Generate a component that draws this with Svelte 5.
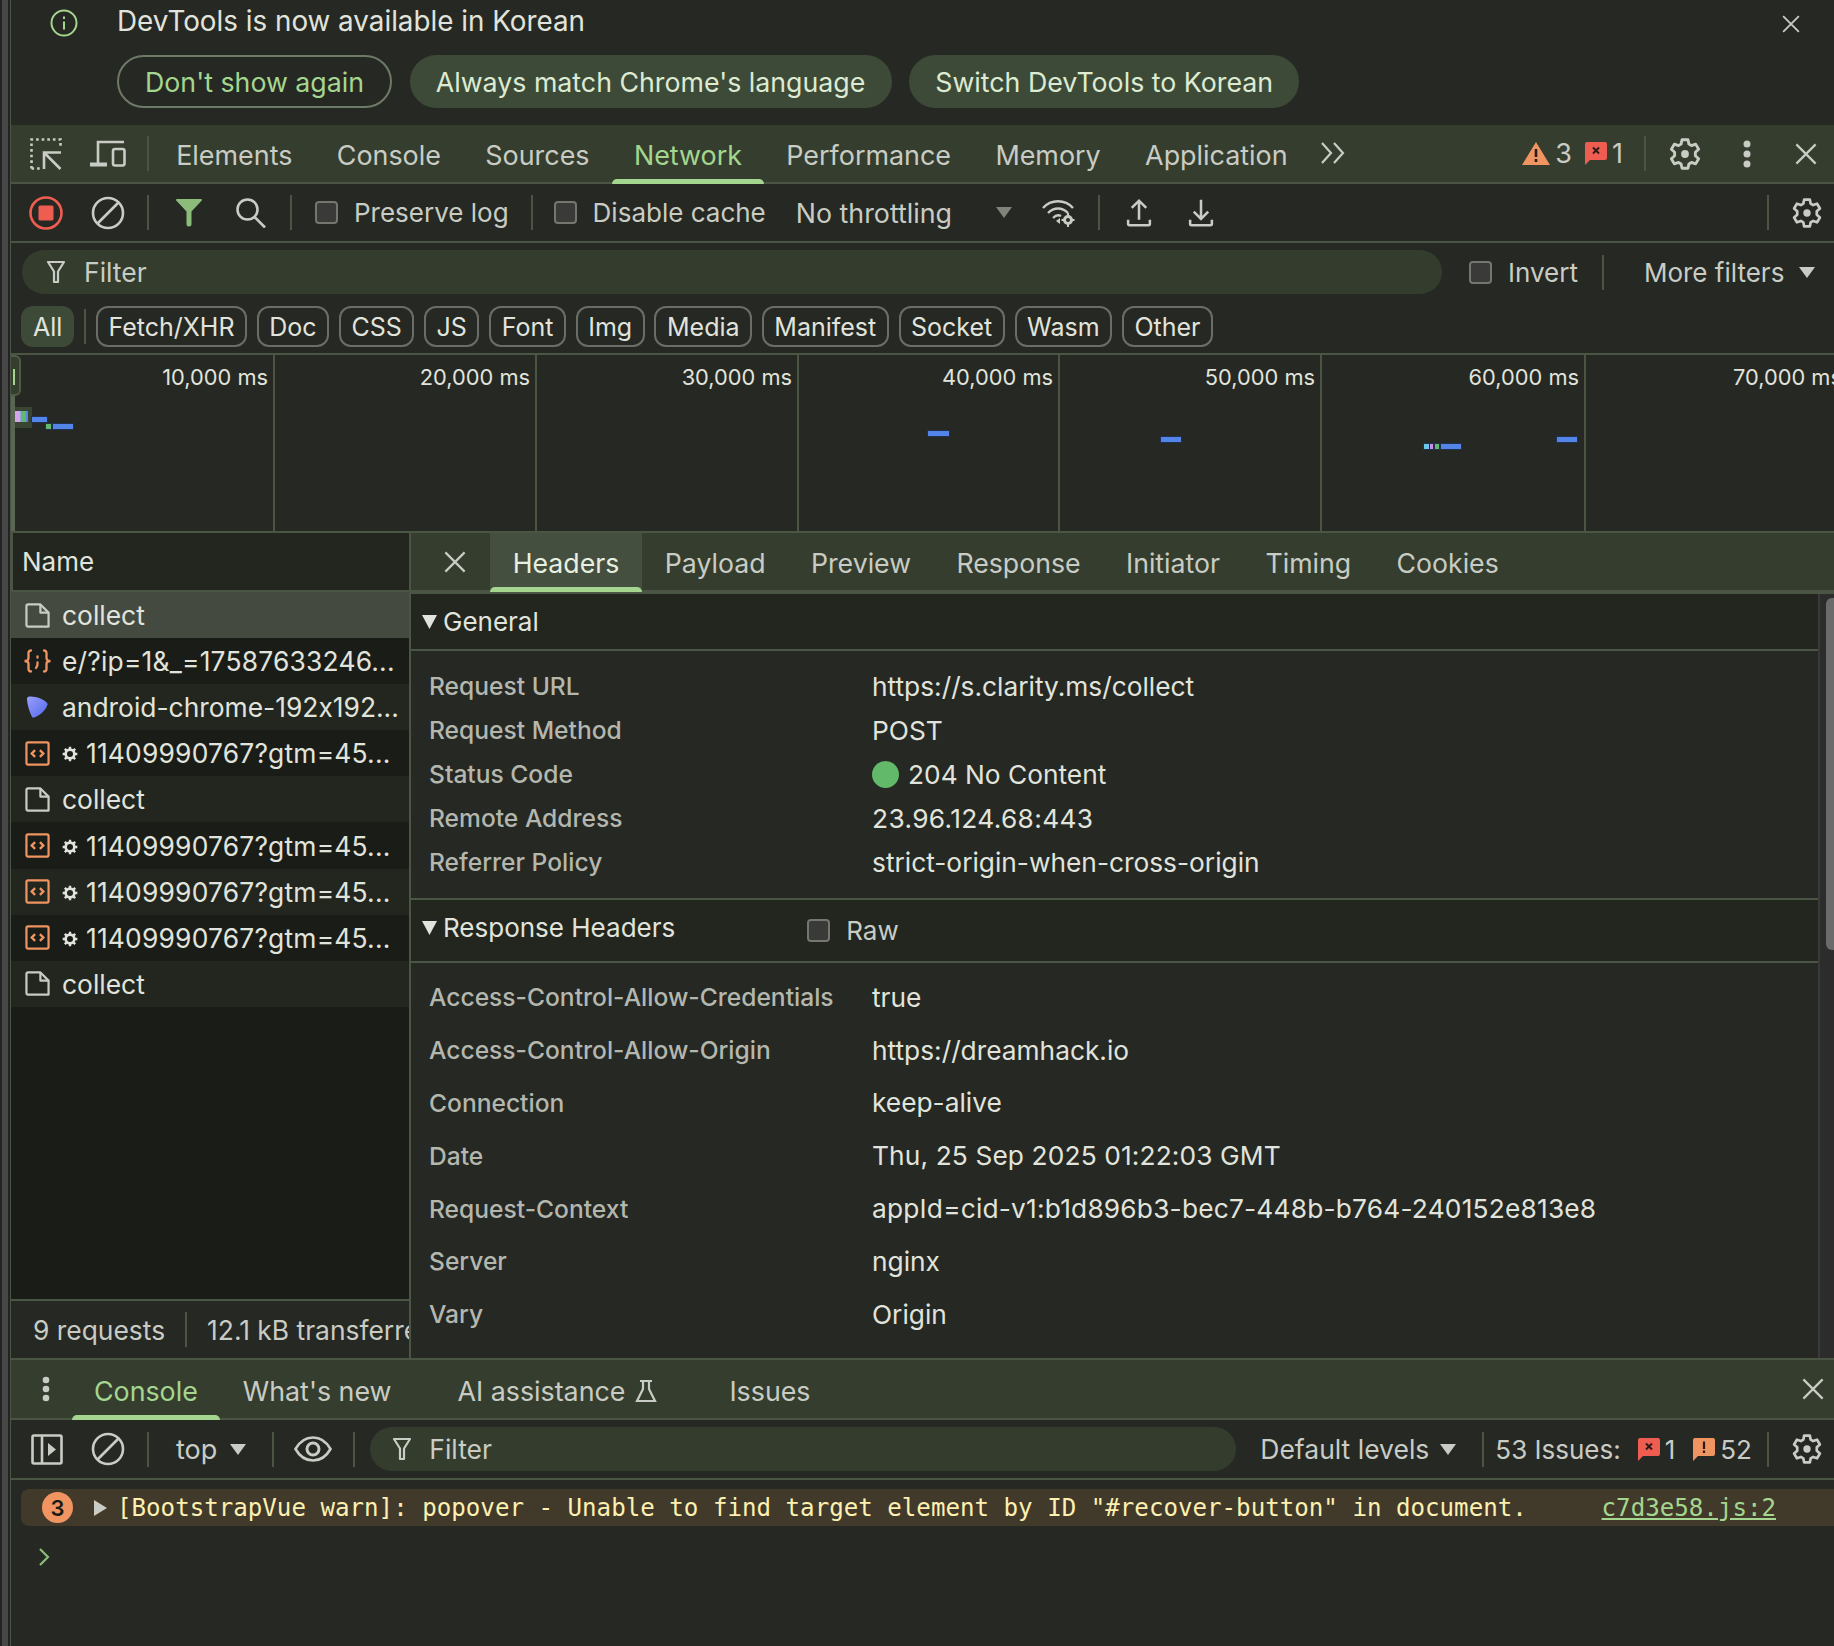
<script>
	const mainTabs = ['Elements', 'Console', 'Sources', 'Network', 'Performance', 'Memory', 'Application'];
	const chips = ['Fetch/XHR', 'Doc', 'CSS', 'JS', 'Font', 'Img', 'Media', 'Manifest', 'Socket', 'Wasm', 'Other'];
	const gridLines = [
		{ w: 264, label: '10,000 ms' },
		{ w: 262, label: '20,000 ms' },
		{ w: 262, label: '30,000 ms' },
		{ w: 261, label: '40,000 ms' },
		{ w: 262, label: '50,000 ms' },
		{ w: 264, label: '60,000 ms' }
	];
	const blue = '#5384e8';
	const green = '#62b96a';
	const bars = [
		{ x: 15, y: 411, w: 5, h: 11, c: '#d3a6ea', flat: true },
		{ x: 20, y: 411, w: 1, h: 11, c: '#9aa0e8', flat: true },
		{ x: 21, y: 411, w: 5, h: 11, c: green, flat: true },
		{ x: 26, y: 411, w: 2, h: 11, c: blue, flat: true },
		{ x: 32, y: 417, w: 15, h: 5, c: blue },
		{ x: 46, y: 424, w: 5, h: 5, c: green },
		{ x: 53, y: 424, w: 20, h: 5, c: blue },
		{ x: 928, y: 431, w: 21, h: 5, c: blue },
		{ x: 1161, y: 437, w: 20, h: 5, c: blue },
		{ x: 1424, y: 444, w: 5, h: 5, c: '#6bc4ea' },
		{ x: 1430, y: 444, w: 3, h: 5, c: '#c98ae8' },
		{ x: 1435, y: 444, w: 4, h: 5, c: green },
		{ x: 1441, y: 444, w: 20, h: 5, c: blue },
		{ x: 1557, y: 437, w: 20, h: 5, c: blue }
	];
	const requests = [
		{ type: 'doc', name: 'collect', selected: true },
		{ type: 'js', name: 'e/?ip=1&_=17587633246...' },
		{ type: 'img', name: 'android-chrome-192x192...' },
		{ type: 'wasm', name: '11409990767?gtm=45...', gear: true },
		{ type: 'doc', name: 'collect' },
		{ type: 'wasm', name: '11409990767?gtm=45...', gear: true },
		{ type: 'wasm', name: '11409990767?gtm=45...', gear: true },
		{ type: 'wasm', name: '11409990767?gtm=45...', gear: true },
		{ type: 'doc', name: 'collect' }
	];
	const detailTabs = ['Headers', 'Payload', 'Preview', 'Response', 'Initiator', 'Timing', 'Cookies'];
	const general = [
		['Request URL', 'https://s.clarity.ms/collect'],
		['Request Method', 'POST'],
		['Status Code', '204 No Content'],
		['Remote Address', '23.96.124.68:443'],
		['Referrer Policy', 'strict-origin-when-cross-origin']
	];
	const response = [
		['Access-Control-Allow-Credentials', 'true'],
		['Access-Control-Allow-Origin', 'https://dreamhack.io'],
		['Connection', 'keep-alive'],
		['Date', 'Thu, 25 Sep 2025 01:22:03 GMT'],
		['Request-Context', 'appId=cid-v1:b1d896b3-bec7-448b-b764-240152e813e8'],
		['Server', 'nginx'],
		['Vary', 'Origin']
	];
	// digit-heavy values run wider in the original font
	const tracking = { 'Remote Address': 0.35, 'Request-Context': 0.2, Date: 0.12 };
</script>

{#snippet gear(size = 36)}
	<svg class="ico" width={size} height={size} viewBox="0 0 24 24" fill="none" stroke="currentColor" stroke-width="1.9" stroke-linejoin="round">
		<path d="M10 2.5h4l.6 2.9 1.7 1 2.8-1 2 3.4-2.2 2v2.4l2.2 2-2 3.4-2.8-1-1.7 1-.6 2.9h-4l-.6-2.9-1.7-1-2.8 1-2-3.4 2.2-2v-2.4l-2.2-2 2-3.4 2.8 1 1.7-1z" />
		<circle cx="12" cy="12" r="2.6" fill="currentColor" stroke="none" />
	</svg>
{/snippet}

{#snippet close(size = 24)}
	<svg class="ico" width={size} height={size} viewBox="0 0 24 24" fill="none" stroke="currentColor" stroke-width="2.4">
		<path d="M1.500 1.500l21 21M22.500 1.500l-21 21" />
	</svg>
{/snippet}

{#snippet block()}
	<svg class="ico" width="34" height="34" viewBox="0 0 34 34" fill="none" stroke="currentColor" stroke-width="2.6">
		<circle cx="17" cy="17" r="15" />
		<path d="M27.500 6.500L6.500 27.500" />
	</svg>
{/snippet}

{#snippet funnel()}
	<svg class="ico" width="20" height="24" viewBox="0 0 20 24" fill="none" stroke="currentColor" stroke-width="2.2" stroke-linejoin="round">
		<path d="M2 2h16l-6 9.500V22H8V11.500z" />
	</svg>
{/snippet}

{#snippet checkbox()}
	<span class="check"></span>
{/snippet}

{#snippet caret()}
	<svg class="ico" width="16" height="11" viewBox="0 0 16 11"><path d="M0 0h16L8 11z" fill="currentColor" /></svg>
{/snippet}

{#snippet sectionCaret()}
	<svg class="ico" width="15" height="14" viewBox="0 0 15 14"><path d="M0 0h15L7.500 14z" fill="currentColor" /></svg>
{/snippet}

{#snippet flagError()}
	<svg class="ico" width="22" height="23" viewBox="0 0 22 23">
		<path d="M2 0h18a2 2 0 0 1 2 2v14a2 2 0 0 1-2 2H5l-5 5V2a2 2 0 0 1 2-2z" fill="#ee5d50" />
		<path d="M8 5.500l6 6M14 5.500l-6 6" stroke="#2a1a18" stroke-width="1.900" />
	</svg>
{/snippet}

{#snippet flagWarn()}
	<svg class="ico" width="22" height="23" viewBox="0 0 22 23">
		<path d="M2 0h18a2 2 0 0 1 2 2v14a2 2 0 0 1-2 2H5l-5 5V2a2 2 0 0 1 2-2z" fill="#f09462" />
		<path d="M11 3.500v7.500M11 12.500v2.500" stroke="#2a1a18" stroke-width="2.200" />
	</svg>
{/snippet}

{#snippet fileIcon(type)}
	{#if type === 'doc'}
		<svg class="ico" width="25" height="25" viewBox="0 0 26 26" fill="none" stroke="#c9ccc4" stroke-width="2.300" stroke-linejoin="round">
			<path d="M3 1.500h13l8.500 8.500V24.500H3a1.500 1.500 0 0 1-1.500-1.500V3A1.500 1.500 0 0 1 3 1.500z" />
			<path d="M16 1.500V10H24.500" />
		</svg>
	{:else if type === 'js'}
		<svg class="ico js-icon" width="29" height="24" viewBox="0 0 29 24" fill="none" stroke="#f09462" stroke-width="2.300" stroke-linecap="round">
			<path d="M8 1.500C5 1.500 5.500 4 5.500 6v3c0 2-1 3-4 3 3 0 4 1 4 3v3c0 2-.5 4.500 2.500 4.500M21 1.500c3 0 2.500 2.500 2.500 4.500v3c0 2 1 3 4 3-3 0-4 1-4 3v3c0 2 .5 4.500-2.500 4.500" />
			<path d="M14.500 7.500v1.200M14.500 13.500c.3 2.500 0 4-1.500 5.500" />
		</svg>
	{:else if type === 'img'}
		<svg class="ico img-icon" width="22" height="22" viewBox="0 0 24 24">
			<defs>
				<linearGradient id="fav" x1="0" y1="0" x2="1" y2="1">
					<stop offset="0" stop-color="#9aa0fb" />
					<stop offset="1" stop-color="#5268ea" />
				</linearGradient>
			</defs>
			<path d="M1 3C1 1 3 .5 5 .5c7 0 14 3 18 7 1 1 .5 2 0 3-2 5-7 10-14 13-1 .4-2 0-2.500-1C3.500 17 1.500 10 1 3z" fill="url(#fav)" />
		</svg>
	{:else}
		<svg class="ico" width="25" height="25" viewBox="0 0 26 26" fill="none" stroke="#f09462" stroke-width="2.300">
			<rect x="1.500" y="1.500" width="23" height="23" rx="1.500" />
			<path d="M10.500 9.500l-3.500 3.500 3.500 3.500M15.500 9.500l3.500 3.500-3.500 3.500" stroke-width="2.500" />
		</svg>
	{/if}
{/snippet}

<div class="page">
	<div class="gutter"></div>
	<div class="devtools">
		<div class="infobar">
			<div class="info-line">
				<svg class="ico info-icon" width="28" height="28" viewBox="0 0 28 28" fill="none" stroke="#a5d690" stroke-width="2">
					<circle cx="14" cy="14" r="12.500" />
					<path d="M14 12.500v8M14 7.500v2.500" />
				</svg>
				<span>DevTools is now available in Korean</span>
				<button class="bare-close">{@render close(18)}</button>
			</div>
			<div class="info-actions">
				<button class="pill outline">Don't show again</button>
				<button class="pill">Always match Chrome's language</button>
				<button class="pill">Switch DevTools to Korean</button>
			</div>
		</div>

		<div class="tabbar main-tabs">
			<svg class="ico inspect" width="32" height="32" viewBox="0 0 32 32" fill="none" stroke="currentColor" stroke-width="2.600">
				<path d="M1.500 30.500V1.500H30.500V9" stroke-dasharray="2.600 3" />
				<path d="M1.500 30.500H10" stroke-dasharray="2.600 3" />
				<path d="M14 31V14.500H31M14 14.500L30.500 31" />
			</svg>
			<svg class="ico device" width="36" height="27" viewBox="0 0 36 27" fill="none" stroke="currentColor" stroke-width="2.600">
				<path d="M34 2H8v21" />
				<path d="M0 24.500h17" stroke-width="4" />
				<rect x="23" y="9" width="11.500" height="16.500" rx="2" />
			</svg>
			<span class="vsep device-sep"></span>
			<div class="tabs">
				{#each mainTabs as t}
					<span class="tab" class:active={t === 'Network'}>{t}</span>
				{/each}
			</div>
			<svg class="ico chevrons" width="26" height="22" viewBox="0 0 26 22" fill="none" stroke="currentColor" stroke-width="2.200">
				<path d="M2 1l9 10-9 10M14 1l9 10-9 10" />
			</svg>
			<div class="grow"></div>
			<div class="counts">
				<svg class="ico" width="28" height="23" viewBox="0 0 28 23">
					<path d="M14 0l14 23H0z" fill="#f09462" />
					<path d="M14 7v8M14 17v3" stroke="#2a1a18" stroke-width="2.600" />
				</svg>
				<span class="num first">3</span>
				{@render flagError()}
				<span class="num">1</span>
			</div>
			<span class="vsep counts-sep"></span>
			{@render gear(36)}
			<svg class="ico dots" width="8" height="28" viewBox="0 0 8 28"><circle cx="4" cy="4" r="3.500" fill="currentColor" /><circle cx="4" cy="14" r="3.500" fill="currentColor" /><circle cx="4" cy="24" r="3.500" fill="currentColor" /></svg>
			{@render close(22)}
		</div>

		<div class="toolbar net-tools">
			<svg class="ico" width="34" height="34" viewBox="0 0 34 34" fill="none">
				<circle cx="17" cy="17" r="15.500" stroke="#ee5d50" stroke-width="2.600" />
				<rect x="9.500" y="9.500" width="15" height="15" rx="1.500" fill="#ee5d50" />
			</svg>
			<span class="after-record">{@render block()}</span>
			<span class="vsep"></span>
			<svg class="ico filter-on" width="26" height="28" viewBox="0 0 26 28">
				<path d="M1 0h24a1 1 0 0 1 .8 1.600L15.500 12.500V25a2.500 2.500 0 0 1-5 0V12.500L.2 1.600A1 1 0 0 1 1 0z" fill="#8cbc7a" />
			</svg>
			<svg class="ico search" width="30" height="30" viewBox="0 0 30 30" fill="none" stroke="currentColor" stroke-width="2.600">
				<circle cx="11.500" cy="11.500" r="10" />
				<path d="M18.500 19l10.500 10.500" />
			</svg>
			<span class="vsep"></span>
			<label class="cb preserve">{@render checkbox()}<span>Preserve log</span></label>
			<span class="vsep"></span>
			<label class="cb disable">{@render checkbox()}<span>Disable cache</span></label>
			<span class="throttle">No throttling</span>
			<span class="throttle-caret">{@render caret()}</span>
			<svg class="ico wifi" width="36" height="30" viewBox="0 0 36 30" fill="none" stroke="currentColor" stroke-width="2.400">
				<path d="M2 10C10 1 24 1 32 10M7 15c6-6 14-6 20 0M12 20c3-3 6-3 8-2" />
				<circle cx="27" cy="22" r="3.500" stroke-width="3" />
				<path d="M27 15v3M27 26v3M20.500 22h3M30.500 22h3" stroke-width="2" />
				<path d="M15 23l4-3v6z" fill="currentColor" stroke="none" />
			</svg>
			<span class="vsep"></span>
			<svg class="ico up" width="26" height="29" viewBox="0 0 28 32" fill="none" stroke="currentColor" stroke-width="2.800">
				<path d="M14 24V3M6 11l8-8 8 8M2 24v4.500a1.500 1.500 0 0 0 1.500 1.500h21a1.500 1.500 0 0 0 1.500-1.500V24" />
			</svg>
			<svg class="ico down" width="26" height="29" viewBox="0 0 28 32" fill="none" stroke="currentColor" stroke-width="2.800">
				<path d="M14 2v21M6 15l8 8 8-8M2 24v4.500a1.500 1.500 0 0 0 1.500 1.500h21a1.500 1.500 0 0 0 1.500-1.500V24" />
			</svg>
			<div class="grow"></div>
			<span class="vsep gear-sep"></span>
			{@render gear(34)}
		</div>

		<div class="filter-row">
			<div class="filter-pill main-filter">
				{@render funnel()}
				<span>Filter</span>
			</div>
			<label class="cb invert">{@render checkbox()}<span>Invert</span></label>
			<span class="vsep"></span>
			<span class="more">More filters</span>
			<span class="more-caret">{@render caret()}</span>
		</div>

		<div class="chip-row">
			<span class="chip all">All</span>
			<span class="vsep chip-sep"></span>
			{#each chips as c}
				<span class="chip">{c}</span>
			{/each}
		</div>

		<div class="overview">
			<div class="grid">
				{#each gridLines as g}
					<div class="slot" style:width="{g.w}px"><span>{g.label}</span></div>
				{/each}
				<div class="slot last"><span>70,000 ms</span></div>
			</div>
			<div class="strip"></div>
			<div class="handle"><span></span></div>
			<div class="hot"></div>
			{#each bars as b}
				<span class="bar" class:flat={b.flat} style:left="{b.x - 11}px" style:top="{b.y - 355}px" style:width="{b.w}px" style:height="{b.h}px" style:background={b.c}></span>
			{/each}
		</div>

		<div class="split">
			<div class="list">
				<div class="list-head">Name</div>
				<div class="rows">
					{#each requests as r, i}
						<div class="row" class:even={i % 2 === 0} class:selected={r.selected} class:tracked={r.type === 'js' || r.type === 'wasm'}>
							<span class="file-icon">{@render fileIcon(r.type)}</span>
							{#if r.gear}
								<svg class="ico row-gear" width="16" height="16" viewBox="0 0 24 24" fill="none" stroke="currentColor" stroke-width="4">
									<circle cx="12" cy="12" r="6.500" />
									<path d="M12 1v4M12 19v4M1 12h4M19 12h4M4.200 4.200l2.800 2.800M17 17l2.800 2.800M19.800 4.200L17 7M7 17l-2.800 2.800" stroke-width="3.600" />
								</svg>
							{/if}
							<span class="row-name">{r.name}</span>
						</div>
					{/each}
				</div>
				<div class="summary">
					<span>9 requests</span>
					<span class="vsep"></span>
					<span>12.1 kB transferred</span>
				</div>
			</div>

			<div class="details">
				<div class="detail-tabs">
					<span class="detail-close">{@render close(22)}</span>
					{#each detailTabs as t, i}
						<span class="dtab" class:active={i === 0}>{t}</span>
					{/each}
				</div>
				<div class="detail-body">
					<div class="track"><div class="thumb"></div></div>
					<div class="section-head first">
						<span class="tri">{@render sectionCaret()}</span>General
					</div>
					<div class="kv general">
						{#each general as [k, v]}
							<div class="kv-row">
								<span class="k">{k}</span>
								<span class="v" style:letter-spacing={tracking[k] ? `${tracking[k]}px` : null}>
									{#if k === 'Status Code'}<span class="dot"></span>{/if}{v}
								</span>
							</div>
						{/each}
					</div>
					<div class="section-head second">
						<span class="tri">{@render sectionCaret()}</span>Response Headers
						<label class="cb raw">{@render checkbox()}<span>Raw</span></label>
					</div>
					<div class="kv resp">
						{#each response as [k, v]}
							<div class="kv-row">
								<span class="k">{k}</span>
								<span class="v" style:letter-spacing={tracking[k] ? `${tracking[k]}px` : null}>{v}</span>
							</div>
						{/each}
					</div>
				</div>
			</div>
		</div>

		<div class="tabbar drawer-tabs">
			<svg class="ico drawer-dots" width="8" height="26" viewBox="0 0 8 26"><circle cx="4" cy="4" r="3.300" fill="currentColor" /><circle cx="4" cy="13" r="3.300" fill="currentColor" /><circle cx="4" cy="22" r="3.300" fill="currentColor" /></svg>
			<span class="tab dt active">Console</span>
			<span class="tab dt">What's new</span>
			<span class="tab dt ai">
				AI assistance
				<svg class="ico" width="22" height="24" viewBox="0 0 22 24" fill="none" stroke="currentColor" stroke-width="2.200">
					<path d="M5 2h12M8 2v8L2 22h18L14 10V2" />
				</svg>
			</span>
			<span class="tab dt issues-tab">Issues</span>
			<div class="grow"></div>
			{@render close(22)}
		</div>

		<div class="toolbar console-tools">
			<svg class="ico" width="32" height="31" viewBox="0 0 32 31" fill="none" stroke="currentColor" stroke-width="2.600">
				<rect x="1.500" y="1.500" width="29" height="28" rx="1.500" />
				<path d="M11 2v27" />
				<path d="M17 9l8 6.500-8 6.500z" fill="currentColor" stroke="none" />
			</svg>
			<span class="after-record">{@render block()}</span>
			<span class="vsep"></span>
			<span class="ctx">top</span>
			<span class="ctx-caret">{@render caret()}</span>
			<span class="vsep"></span>
			<svg class="ico eye" width="38" height="26" viewBox="0 0 38 26" fill="none" stroke="currentColor" stroke-width="2.600">
				<path d="M1.500 13C6 5 12 1.500 19 1.500S32 5 36.500 13C32 21 26 24.500 19 24.500S6 21 1.500 13z" />
				<circle cx="19" cy="13" r="6" stroke-width="3" />
			</svg>
			<span class="vsep"></span>
			<div class="filter-pill console-filter">
				{@render funnel()}
				<span>Filter</span>
			</div>
			<span class="levels">Default levels</span>
			<span class="levels-caret">{@render caret()}</span>
			<span class="vsep"></span>
			<span class="issues">53 Issues:</span>
			{@render flagError()}
			<span class="inum">1</span>
			{@render flagWarn()}
			<span class="inum last">52</span>
			<span class="vsep gear-sep"></span>
			{@render gear(34)}
		</div>

		<div class="console-body">
			<div class="warn">
				<span class="badge">3</span>
				<svg class="ico" width="13" height="16" viewBox="0 0 13 16"><path d="M0 0l13 8-13 8z" fill="#c9ccc4" /></svg>
				<span class="msg">[BootstrapVue warn]: popover - Unable to find target element by ID "#recover-button" in document.</span>
				<span class="src">c7d3e58.js:2</span>
			</div>
			<svg class="ico prompt" width="12" height="18" viewBox="0 0 12 18" fill="none" stroke="#8cbc7a" stroke-width="2.200"><path d="M2 1l8 8-8 8" /></svg>
		</div>
	</div>
</div>

<style>
	:global(body) {
		margin: 0;
		background: #262823;
	}

	.page {
		display: flex;
		width: 1834px;
		height: 1646px;
		overflow: hidden;
		font-family: Inter, 'Liberation Sans', sans-serif;
		font-feature-settings: 'calt' 0;
		font-size: 26px;
		color: #c9ccc4;
		background: #262823;
	}

	.gutter {
		flex: 0 0 11px;
		box-sizing: border-box;
		border-right: 1px solid #4a5544;
		background: linear-gradient(90deg, #232323 0 2px, #474747 2px 8px, #232323 8px);
	}

	.devtools {
		flex: 1;
		min-width: 0;
		display: flex;
		flex-direction: column;
	}

	.ico {
		flex: none;
		display: block;
	}

	.grow {
		flex: 1;
	}

	.vsep {
		flex: none;
		width: 2px;
		height: 35px;
		background: #4a5544;
	}

	button {
		font: inherit;
		margin: 0;
		padding: 0;
		background: none;
		border: none;
		color: inherit;
	}

	/* infobar */
	.infobar {
		flex: none;
		height: 125px;
		color: #e1e4dc;
	}

	.info-line {
		display: flex;
		align-items: center;
		height: 42px;
		padding-left: 39px;
		font-size: 27.8px;
	}

	.info-icon {
		margin-right: 39px;
		margin-top: 3px;
	}

	.bare-close {
		margin-left: auto;
		margin-right: 34px;
		margin-top: 6px;
		color: #c9ccc4;
	}

	.info-actions {
		display: flex;
		gap: 17.5px;
		margin-top: 13px;
		padding-left: 106px;
	}

	.pill {
		height: 53px;
		box-sizing: border-box;
		padding: 0 26.2px;
		border-radius: 27px;
		background: #3e4a38;
		color: #dcebd2;
		font-size: 26.75px;
		white-space: nowrap;
	}

	.pill.outline {
		background: none;
		border: 2px solid #6e7a68;
		color: #a5d690;
		padding: 0 26px;
	}

	/* tab bars */
	.tabbar {
		display: flex;
		align-items: center;
		flex: none;
		box-sizing: border-box;
		background: #353e2e;
		border-bottom: 2px solid #4a5544;
	}

	.main-tabs {
		height: 59px;
		padding-left: 19px;
		padding-right: 17px;
	}

	.device {
		margin-left: 28px;
	}

	.device-sep {
		margin-left: 21px;
	}

	.tabs {
		display: flex;
		align-self: stretch;
		margin-left: 5px;
	}

	.tab {
		position: relative;
		display: flex;
		align-items: center;
		padding: 3px 22.2px 0;
		font-size: 26.9px;
		white-space: nowrap;
	}

	.tab.active {
		color: #a5d690;
	}

	.tab.active::after {
		content: '';
		position: absolute;
		left: 0;
		right: 0;
		bottom: -2px;
		height: 5px;
		border-radius: 5px 5px 0 0;
		background: #a5d690;
	}

	.chevrons {
		margin-left: 10px;
		margin-top: -2px;
	}

	.counts {
		display: flex;
		align-items: center;
		gap: 5px;
		font-size: 27px;
	}

	.num.first {
		margin-right: 8px;
	}

	.counts-sep {
		margin-left: 21px;
		margin-right: 21px;
	}

	.dots {
		margin: 0 44px 0 40px;
	}

	/* toolbars */
	.toolbar {
		display: flex;
		align-items: center;
		flex: none;
		box-sizing: border-box;
		border-bottom: 2px solid #4a5544;
	}

	.net-tools {
		height: 59px;
		padding-left: 18px;
		padding-right: 10px;
	}

	.after-record {
		margin-left: 28px;
		margin-right: 22px;
	}

	.filter-on {
		margin-left: 27px;
	}

	.search {
		margin-left: 34px;
		margin-right: 24px;
	}

	.cb {
		display: flex;
		align-items: center;
		white-space: nowrap;
	}

	.check {
		flex: none;
		width: 23px;
		height: 23px;
		box-sizing: border-box;
		border: 2px solid #74766f;
		border-radius: 4px;
		background: #3a3b38;
	}

	.preserve {
		margin-left: 23px;
		margin-right: 22px;
		gap: 16px;
	}

	.disable {
		margin-left: 21px;
		gap: 16px;
	}

	.throttle {
		margin-left: 30px;
		font-size: 26.8px;
	}

	.throttle-caret {
		margin-left: 44px;
		color: #808379;
	}

	.wifi {
		margin-left: 29px;
		margin-right: 21px;
	}

	.up {
		margin-left: 26px;
	}

	.down {
		margin-left: 36px;
	}

	.gear-sep {
		margin-right: 21px;
	}

	/* filter row */
	.filter-row {
		display: flex;
		align-items: center;
		flex: none;
		box-sizing: border-box;
		height: 63px;
		padding-left: 11px;
		padding-bottom: 5px;
	}

	.filter-pill {
		display: flex;
		align-items: center;
		box-sizing: border-box;
		height: 44px;
		border-radius: 22px;
		background: #343d2d;
		padding-left: 24px;
		gap: 18px;
	}

	.filter-pill span {
		font-size: 26.5px;
	}

	.main-filter {
		flex: none;
		width: 1420px;
	}

	.invert {
		margin-left: 27px;
		gap: 16px;
	}

	.filter-row .vsep {
		margin-left: 24px;
	}

	.more {
		margin-left: 40px;
	}

	.more-caret {
		margin-left: 15px;
	}

	/* chips */
	.chip-row {
		display: flex;
		align-items: flex-start;
		flex: none;
		height: 49px;
		box-sizing: border-box;
		padding-left: 10px;
		gap: 9.8px;
		border-bottom: 2px solid #4a5544;
	}

	.chip {
		display: flex;
		align-items: center;
		box-sizing: border-box;
		height: 41px;
		padding: 0 10.5px;
		border: 2px solid #6b6e66;
		border-radius: 12px;
		font-size: 25px;
		color: #e1e4dc;
	}

	.chip.all {
		border: none;
		background: #3e4a38;
		padding: 0 12px;
	}

	.chip-sep {
		height: 35px;
		margin-top: 3px;
	}

	/* overview */
	.overview {
		position: relative;
		flex: none;
		height: 178px;
		box-sizing: border-box;
		overflow: hidden;
		border-bottom: 2px solid #4a5544;
	}

	.grid {
		display: flex;
		height: 100%;
	}

	.slot {
		flex: none;
		box-sizing: border-box;
		display: flex;
		justify-content: flex-end;
		padding: 9px 5px 0 0;
		border-right: 2px solid #4a5544;
		font-size: 21.8px;
		color: #e1e4dc;
		white-space: nowrap;
	}

	.slot.last {
		width: 260px;
		border-right: none;
		justify-content: flex-start;
		padding-left: 147px;
	}

	.strip {
		position: absolute;
		left: 0;
		top: 0;
		bottom: 0;
		width: 4px;
		background: #5a6554;
	}

	.handle {
		position: absolute;
		left: 0;
		top: 0;
		width: 10px;
		height: 41px;
		box-sizing: border-box;
		border: 2px solid #4f5b49;
		border-left: none;
		border-radius: 0 6px 6px 0;
		background: #353e2e;
	}

	.handle span {
		position: absolute;
		left: 2px;
		top: 12px;
		width: 2px;
		height: 16px;
		background: #a5d690;
	}

	.hot {
		position: absolute;
		left: 4px;
		top: 52px;
		width: 17px;
		height: 21px;
		background: #3a4433;
	}

	.bar {
		position: absolute;
		box-shadow: 0 0 0 1px #22304f;
	}

	.bar.flat {
		box-shadow: none;
	}

	/* split */
	.split {
		display: flex;
		height: 827px;
		flex: none;
		box-sizing: border-box;
		border-bottom: 2px solid #4a5544;
	}

	.list {
		flex: 0 0 400px;
		min-width: 0;
		box-sizing: border-box;
		display: flex;
		flex-direction: column;
		overflow: hidden;
		border-right: 2px solid #4a5544;
		background: #262823;
	}

	.list-head {
		display: flex;
		align-items: center;
		flex: none;
		height: 59px;
		box-sizing: border-box;
		padding-left: 9px;
		background: #22261f;
		border-left: 2px solid #4a5544;
		border-bottom: 2px solid #4a5544;
		color: #e1e4dc;
	}

	.rows {
		flex: 1;
		min-height: 0;
		background: #1a1c17;
	}

	.row {
		display: flex;
		align-items: center;
		height: 46.1px;
		color: #e1e4dc;
		background: #1a1c17;
		font-size: 26.4px;
	}

	.row.tracked {
		letter-spacing: 0.2px;
	}

	.row.even {
		background: #22261f;
	}

	.row.selected {
		background: #454a41;
	}

	.file-icon {
		flex: none;
		width: 51px;
		box-sizing: border-box;
		display: flex;
		padding-left: 14px;
	}

	.js-icon {
		margin-left: -2px;
	}

	.img-icon {
		margin-left: 1px;
	}

	.row-gear {
		margin: 2px 8px 0 0;
	}

	.row-name {
		white-space: nowrap;
	}

	.summary {
		display: flex;
		align-items: center;
		flex: none;
		height: 59px;
		box-sizing: border-box;
		padding-left: 22px;
		gap: 20px;
		border-top: 2px solid #4a5544;
		font-size: 26.4px;
		white-space: nowrap;
	}

	.details {
		flex: 1;
		min-width: 0;
		display: flex;
		flex-direction: column;
	}

	.detail-tabs {
		display: flex;
		flex: none;
		height: 61px;
		box-sizing: border-box;
		background: #353e2e;
		border-bottom: 4px solid #4a5544;
	}

	.detail-close {
		display: flex;
		align-items: center;
		box-sizing: border-box;
		padding-left: 33px;
		width: 79px;
	}

	.dtab {
		position: relative;
		display: flex;
		align-items: center;
		padding: 3px 22.7px 0;
		font-size: 26.7px;
		white-space: nowrap;
	}

	.dtab.active {
		background: #454f3f;
		color: #e8f0e0;
	}

	.dtab.active::after {
		content: '';
		position: absolute;
		left: 0;
		right: 0;
		bottom: -2px;
		height: 5px;
		border-radius: 5px 5px 0 0;
		background: #a5d690;
	}

	.detail-body {
		position: relative;
		flex: 1;
		min-height: 0;
		overflow: hidden;
	}

	.track {
		position: absolute;
		right: 0;
		top: 0;
		bottom: 0;
		width: 16px;
		box-sizing: border-box;
		border-left: 2px solid #3a3b38;
		background: #2c2c2c;
	}

	.thumb {
		position: absolute;
		left: 6px;
		right: 0;
		top: 4px;
		height: 352px;
		background: #6b6b6b;
		border-radius: 6px 0 0 6px;
	}

	.section-head {
		display: flex;
		align-items: center;
		box-sizing: border-box;
		height: 57px;
		padding-left: 11px;
		margin-right: 16px;
		color: #e1e4dc;
		border-bottom: 2px solid #4a5544;
		background: #22261f;
	}

	.section-head.second {
		height: 65px;
		border-top: 2px solid #4a5544;
		padding-bottom: 6px;
	}

	.tri {
		margin-right: 6px;
		color: #e1e4dc;
	}

	.raw {
		margin-left: 132px;
		margin-top: 6px;
		gap: 16px;
		color: #c9ccc4;
	}

	.kv {
		padding-left: 18px;
		margin-right: 16px;
		font-size: 24.6px;
	}

	.general {
		padding-top: 13px;
		padding-bottom: 14px;
	}

	.general .kv-row {
		height: 44px;
	}

	.resp {
		padding-top: 8px;
	}

	.resp .kv-row {
		height: 52.8px;
	}

	.kv-row {
		display: flex;
		align-items: center;
	}

	.k {
		flex: 0 0 443px;
		color: #b4b7ae;
		font-weight: 500;
		white-space: nowrap;
	}

	.v {
		display: flex;
		align-items: center;
		color: #e1e4dc;
		font-size: 26.3px;
		white-space: nowrap;
	}

	.dot {
		width: 27px;
		height: 27px;
		margin-right: 9px;
		border-radius: 50%;
		background: #62b96a;
	}

	/* drawer */
	.drawer-tabs {
		height: 60px;
		padding-right: 10px;
	}

	.drawer-dots {
		margin: 0 21.5px 0 31px;
	}

	.dt {
		padding: 3px 22.5px 0;
		align-self: stretch;
		font-size: 26.8px;
	}

	.dt.ai {
		gap: 10px;
		margin-left: 21px;
	}

	.issues-tab {
		margin-left: 27px;
	}

	.console-tools {
		height: 60px;
		padding-left: 20px;
		padding-right: 10px;
	}

	.ctx {
		margin-left: 27px;
		font-size: 27px;
	}

	.ctx-caret {
		margin-left: 13px;
		margin-right: 26px;
	}

	.eye {
		margin-left: 20px;
		margin-right: 21px;
	}

	.console-filter {
		flex: none;
		margin-left: 15px;
		width: 866px;
		padding-left: 22px;
		gap: 17px;
	}

	.levels {
		margin-left: 24px;
		font-size: 26.5px;
	}

	.levels-caret {
		margin-left: 11px;
		margin-right: 26px;
	}

	.issues {
		margin-left: 11px;
		margin-right: 17px;
	}

	.inum {
		margin-left: 5px;
		margin-right: 18px;
	}

	.inum.last {
		margin-left: 5px;
		margin-right: 15px;
	}

	.console-body {
		flex: 1;
		padding-top: 9px;
	}

	.warn {
		display: flex;
		align-items: center;
		height: 37px;
		margin-left: 10px;
		padding-left: 21px;
		border-radius: 8px 0 0 8px;
		background: #413a2b;
		font-family: 'DejaVu Sans Mono', 'Liberation Mono', monospace;
		font-size: 24.15px;
		color: #fdf0b0;
		white-space: nowrap;
	}

	.badge {
		flex: none;
		display: flex;
		align-items: center;
		justify-content: center;
		width: 31px;
		height: 31px;
		border-radius: 50%;
		margin-right: 21px;
		background: #f09462;
		color: #1a1c17;
		font-family: Inter, sans-serif;
		font-weight: 600;
		font-size: 22px;
	}

	.msg {
		margin-left: 10px;
	}

	.src {
		margin-left: auto;
		margin-right: 58px;
		color: #a5d690;
		text-decoration: underline;
	}

	.prompt {
		margin: 22px 0 0 27px;
	}
</style>
